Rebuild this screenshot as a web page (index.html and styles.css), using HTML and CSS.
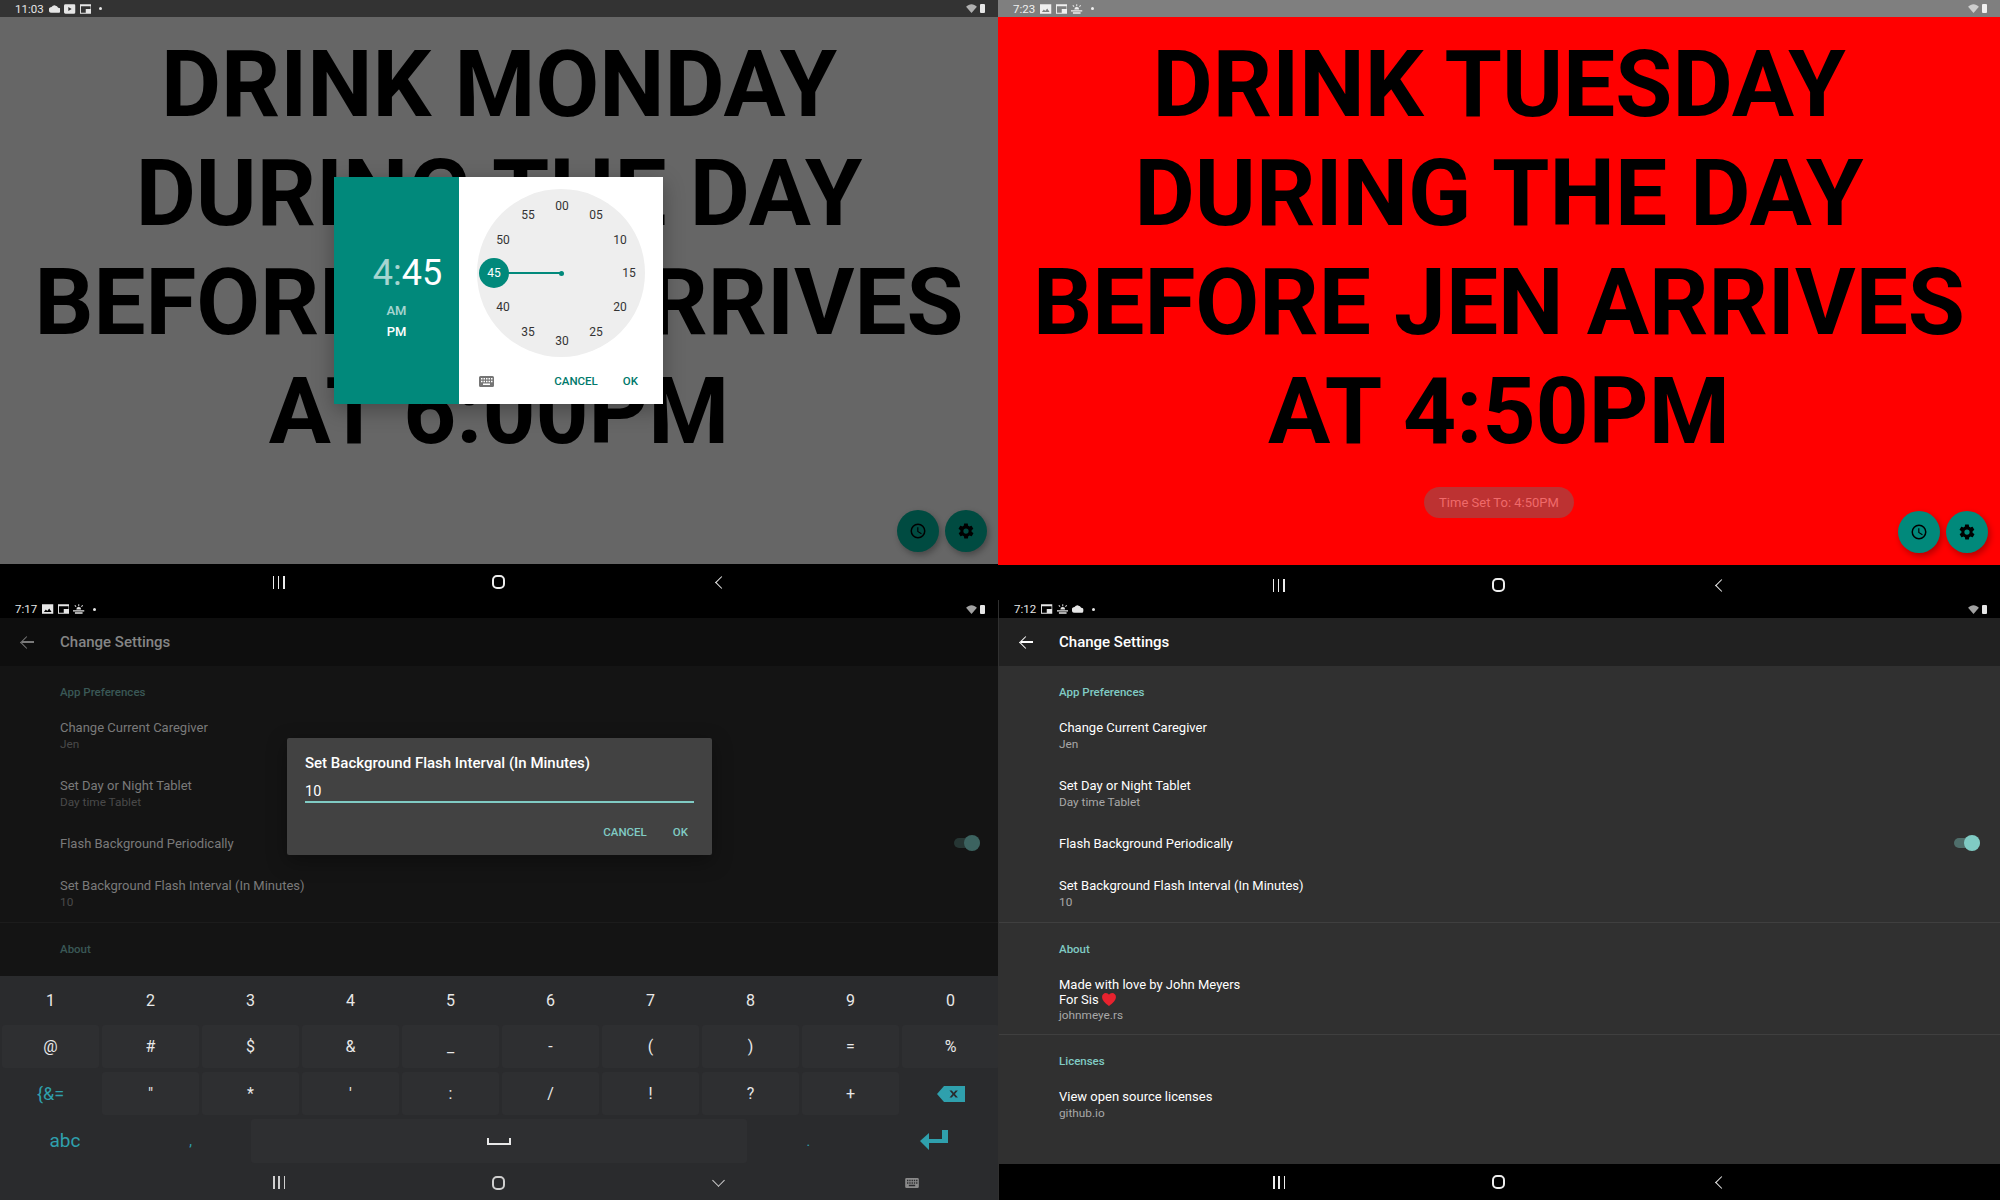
FILE: index.html
```html
<!DOCTYPE html>
<html lang="en">
<head>
    <meta charset="UTF-8" />
    <title>Drink Reminder Screens</title>
    <link rel="stylesheet" href="styles.css">
</head>
<body>
    <svg class="defs" width="0" height="0">
        <symbol id="i-cloud" viewBox="0 0 12 8"><path d="M3 8a3 3 0 0 1-.4-6A4 4 0 0 1 9.600 2.600 2.700 2.700 0 0 1 9.500 8z"/></symbol>
        <symbol id="i-play" viewBox="0 0 12 10"><path fill-rule="evenodd" d="M1.500 0h9A1.500 1.500 0 0 1 12 1.500v7a1.500 1.500 0 0 1-1.500 1.500h-9A1.500 1.500 0 0 1 0 8.500v-7A1.500 1.500 0 0 1 1.500 0zM4.500 2.800v4.400L8 5z"/></symbol>
        <symbol id="i-window" viewBox="0 0 12 10"><path fill-rule="evenodd" d="M0 0h12v10H0zM1 2v7h5V5h5V2z"/></symbol>
        <symbol id="i-photo" viewBox="0 0 12 10"><path fill-rule="evenodd" d="M0 0h12v10H0zM2 8h8L7.500 4.500 5.500 7 4 5.500z"/></symbol>
        <symbol id="i-sun" viewBox="0 0 12 10"><path d="M3.500 5.500a2.500 2.500 0 0 1 5 0zM5.500 0h1v2h-1zM1.500 1.500l.7-.7 1.400 1.400-.7.7zM10.500 1.500l-.7-.7-1.400 1.400.7.7zM0 6.300h12v1.200H0zM2 8.500h8V10H2z"/></symbol>
        <symbol id="i-wifi" viewBox="0 0 12 10"><path d="M6 10L0 3C3.500-.8 8.500-.8 12 3z"/></symbol>
        <symbol id="i-clock" viewBox="0 0 24 24"><path d="M12 2a10 10 0 1 0 0 20 10 10 0 0 0 0-20zm0 18a8 8 0 1 1 0-16 8 8 0 0 1 0 16zm.5-13H11v6l5.200 3.200.8-1.300-4.500-2.700z"/></symbol>
        <symbol id="i-gear" viewBox="0 0 24 24"><path d="M19.400 13c.1-.3.100-.7.100-1s0-.7-.1-1l2.100-1.600c.2-.2.200-.4.100-.6l-2-3.500c-.1-.2-.4-.3-.6-.2l-2.500 1c-.5-.4-1.100-.7-1.700-1l-.4-2.700c0-.2-.2-.4-.5-.4h-4c-.2 0-.4.200-.5.400l-.4 2.700c-.6.200-1.100.6-1.700 1l-2.500-1c-.2-.1-.5 0-.6.200l-2 3.500c-.1.200-.1.500.1.600L4.600 11c0 .3-.1.700-.1 1s0 .7.100 1l-2.100 1.600c-.2.200-.2.400-.1.600l2 3.500c.1.200.4.300.6.200l2.500-1c.5.400 1.100.7 1.700 1l.4 2.700c0 .2.200.4.500.4h4c.2 0 .4-.2.500-.4l.4-2.700c.6-.2 1.100-.6 1.700-1l2.500 1c.2.100.5 0 .6-.2l2-3.500c.1-.2.100-.5-.1-.6zM12 15.500a3.500 3.500 0 1 1 0-7 3.500 3.500 0 0 1 0 7z"/></symbol>
        <symbol id="i-keyboard" viewBox="0 0 15 11"><path fill-rule="evenodd" d="M1.500 0h12A1.500 1.500 0 0 1 15 1.500v8a1.500 1.500 0 0 1-1.500 1.500h-12A1.500 1.500 0 0 1 0 9.500v-8A1.500 1.500 0 0 1 1.500 0zM2 2v1.500h1.500V2zm2.500 0v1.500H6V2zM7 2v1.500h1.500V2zm2.500 0v1.500H11V2zM12 2v1.500h1.500V2zM2 4.700v1.500h1.500V4.700zm2.500 0v1.500H6V4.700zm2.500 0v1.500h1.500V4.700zm2.500 0v1.500H11V4.700zm2.500 0v1.500h1.500V4.700zM4 7.500V9h7V7.500z"/></symbol>
    </svg>

    <div class="screens">

        <!-- monday, time picker open -->
        <section class="screen screen-monday">
            <div class="status status-dim">
                <span class="clock-text">11:03</span>
                <svg class="si"><use href="#i-cloud"/></svg>
                <svg class="si"><use href="#i-play"/></svg>
                <svg class="si"><use href="#i-window"/></svg>
                <i class="status-dot"></i>
                <span class="spacer"></span>
                <svg class="si-wifi"><use href="#i-wifi"/></svg>
                <i class="battery"></i>
            </div>
            <div class="poster">
                <h1>DRINK MONDAY<br>DURING THE DAY<br>BEFORE JEN ARRIVES<br>AT 6:00PM</h1>
                <div class="fabs fabs-dim">
                    <span class="fab"><svg><use href="#i-clock"/></svg></span>
                    <span class="fab"><svg><use href="#i-gear"/></svg></span>
                </div>
            </div>
            <div class="nav">
                <span class="nav-recents"><i></i><i></i><i></i></span>
                <span class="nav-home"></span>
                <span class="nav-back"></span>
            </div>

            <div class="picker">
                <div class="picker-head">
                    <div class="picker-time"><span class="picker-hour">4</span><span class="picker-hour">:</span>45</div>
                    <div class="picker-ampm">
                        <span class="picker-am">AM</span>
                        <span>PM</span>
                    </div>
                </div>
                <div class="picker-body">
                    <div class="dial">
                        <span class="dial-hand"></span>
                        <span class="dial-dot"></span>
                        <span class="dial-sel">45</span>
                        <span class="dial-n" style="left:84px;top:17px">00</span>
                        <span class="dial-n" style="left:118px;top:26px">05</span>
                        <span class="dial-n" style="left:142px;top:51px">10</span>
                        <span class="dial-n" style="left:151px;top:84px">15</span>
                        <span class="dial-n" style="left:142px;top:118px">20</span>
                        <span class="dial-n" style="left:118px;top:143px">25</span>
                        <span class="dial-n" style="left:84px;top:152px">30</span>
                        <span class="dial-n" style="left:50px;top:143px">35</span>
                        <span class="dial-n" style="left:25px;top:118px">40</span>
                        <span class="dial-n" style="left:25px;top:51px">50</span>
                        <span class="dial-n" style="left:50px;top:26px">55</span>
                    </div>
                    <div class="picker-actions">
                        <svg class="picker-kb"><use href="#i-keyboard"/></svg>
                        <span class="spacer"></span>
                        <span class="btn-cancel">CANCEL</span>
                        <span class="btn-ok">OK</span>
                    </div>
                </div>
            </div>
        </section>

        <!-- tuesday -->
        <section class="screen screen-tuesday">
            <div class="status status-grey">
                <span class="clock-text">7:23</span>
                <svg class="si"><use href="#i-photo"/></svg>
                <svg class="si"><use href="#i-window"/></svg>
                <svg class="si"><use href="#i-sun"/></svg>
                <i class="status-dot"></i>
                <span class="spacer"></span>
                <svg class="si-wifi"><use href="#i-wifi"/></svg>
                <i class="battery"></i>
            </div>
            <div class="poster">
                <h1>DRINK TUESDAY<br>DURING THE DAY<br>BEFORE JEN ARRIVES<br>AT 4:50PM</h1>
                <div class="toast">Time Set To: 4:50PM</div>
                <div class="fabs">
                    <span class="fab"><svg><use href="#i-clock"/></svg></span>
                    <span class="fab"><svg><use href="#i-gear"/></svg></span>
                </div>
            </div>
            <div class="nav nav-short">
                <span class="nav-recents"><i></i><i></i><i></i></span>
                <span class="nav-home"></span>
                <span class="nav-back"></span>
            </div>
        </section>

        <!-- settings, interval dialog and keyboard -->
        <section class="screen settings settings-dim">
            <div class="status status-black">
                <span class="clock-text">7:17</span>
                <svg class="si"><use href="#i-photo"/></svg>
                <svg class="si"><use href="#i-window"/></svg>
                <svg class="si"><use href="#i-sun"/></svg>
                <i class="status-dot"></i>
                <span class="spacer"></span>
                <svg class="si-wifi"><use href="#i-wifi"/></svg>
                <i class="battery"></i>
            </div>
            <div class="appbar">
                <span class="arrow-back"></span>
                <span class="appbar-title">Change Settings</span>
            </div>
            <div class="list">
                <div class="group">
                    <div class="group-label">App Preferences</div>
                    <div class="row"><div class="row-title">Change Current Caregiver</div><div class="row-sub">Jen</div></div>
                    <div class="row"><div class="row-title">Set Day or Night Tablet</div><div class="row-sub">Day time Tablet</div></div>
                    <div class="row row-switch"><div class="row-title">Flash Background Periodically</div><span class="switch"></span></div>
                    <div class="row row-last"><div class="row-title">Set Background Flash Interval (In Minutes)</div><div class="row-sub">10</div></div>
                </div>
                <div class="group">
                    <div class="group-label">About</div>
                </div>
            </div>

            <div class="keyboard">
                <div class="kb-row kb-numbers">
                    <span class="key">1</span><span class="key">2</span><span class="key">3</span><span class="key">4</span><span class="key">5</span>
                    <span class="key">6</span><span class="key">7</span><span class="key">8</span><span class="key">9</span><span class="key">0</span>
                </div>
                <div class="kb-row kb-tall">
                    <span class="key key-bg">@</span><span class="key key-bg">#</span><span class="key key-bg">$</span><span class="key key-bg">&amp;</span><span class="key key-bg">_</span>
                    <span class="key key-bg">-</span><span class="key key-bg">(</span><span class="key key-bg">)</span><span class="key key-bg">=</span><span class="key key-bg">%</span>
                </div>
                <div class="kb-row kb-tall">
                    <span class="key key-teal key-sym">{&amp;=</span><span class="key key-bg">"</span><span class="key key-bg">*</span><span class="key key-bg">'</span><span class="key key-bg">:</span>
                    <span class="key key-bg">/</span><span class="key key-bg">!</span><span class="key key-bg">?</span><span class="key key-bg">+</span>
                    <span class="key">
                        <svg class="kb-del" viewBox="0 0 28 16"><path fill-rule="evenodd" d="M7 0h21v16H7L0 8zM12.500 4.500l3 3.500-3 3.500h2.300l1.900-2.300 1.900 2.300h2.300l-3-3.500 3-3.500h-2.300l-1.900 2.300-1.900-2.300z"/></svg>
                    </span>
                </div>
                <div class="kb-row kb-bottom">
                    <span class="key key-teal key-abc">abc</span>
                    <span class="key key-teal key-comma">,</span>
                    <span class="key key-bg key-space"><i class="space-mark"></i></span>
                    <span class="key key-teal key-dot">.</span>
                    <span class="key key-enter">
                        <svg class="kb-enter" viewBox="0 0 28 20"><path d="M22 0h6v13H9v7L0 11l9-8v6h13z"/></svg>
                    </span>
                </div>
                <div class="nav nav-kb">
                    <span class="nav-recents"><i></i><i></i><i></i></span>
                    <span class="nav-home"></span>
                    <span class="nav-down"></span>
                    <svg class="nav-kb-icon"><use href="#i-keyboard"/></svg>
                </div>
            </div>

            <div class="interval">
                <div class="interval-title">Set Background Flash Interval (In Minutes)</div>
                <div class="interval-input">10</div>
                <div class="interval-actions">
                    <span>CANCEL</span>
                    <span>OK</span>
                </div>
            </div>
        </section>

        <!-- settings -->
        <section class="screen settings settings-full">
            <div class="status status-black">
                <span class="clock-text">7:12</span>
                <svg class="si"><use href="#i-window"/></svg>
                <svg class="si"><use href="#i-sun"/></svg>
                <svg class="si"><use href="#i-cloud"/></svg>
                <i class="status-dot"></i>
                <span class="spacer"></span>
                <svg class="si-wifi"><use href="#i-wifi"/></svg>
                <i class="battery"></i>
            </div>
            <div class="appbar">
                <span class="arrow-back"></span>
                <span class="appbar-title">Change Settings</span>
            </div>
            <div class="list">
                <div class="group">
                    <div class="group-label">App Preferences</div>
                    <div class="row"><div class="row-title">Change Current Caregiver</div><div class="row-sub">Jen</div></div>
                    <div class="row"><div class="row-title">Set Day or Night Tablet</div><div class="row-sub">Day time Tablet</div></div>
                    <div class="row row-switch"><div class="row-title">Flash Background Periodically</div><span class="switch"></span></div>
                    <div class="row row-last"><div class="row-title">Set Background Flash Interval (In Minutes)</div><div class="row-sub">10</div></div>
                </div>
                <div class="group">
                    <div class="group-label">About</div>
                    <div class="row row-about">
                        <div class="row-title">Made with love by John Meyers<br>For Sis <svg class="heart" viewBox="0 0 16 15"><path d="M8 15C3 11 0 8 0 4.500 0 2 2 0 4.300 0 5.800 0 7.200.8 8 2.100 8.800.8 10.200 0 11.700 0 14 0 16 2 16 4.500 16 8 13 11 8 15z"/></svg></div>
                        <div class="row-sub">johnmeye.rs</div>
                    </div>
                </div>
                <div class="group">
                    <div class="group-label">Licenses</div>
                    <div class="row"><div class="row-title">View open source licenses</div><div class="row-sub">github.io</div></div>
                </div>
            </div>
            <div class="nav">
                <span class="nav-recents"><i></i><i></i><i></i></span>
                <span class="nav-home"></span>
                <span class="nav-back"></span>
            </div>
        </section>

    </div>
</body>
</html>
```

FILE: styles.css
```css
* {
    box-sizing: border-box;
}

html, body {
    margin: 0;
    height: 100%;
}

body {
    font-family: Roboto, "Noto Sans", sans-serif;
    background: #000;
    overflow: hidden;
}

.defs {
    position: absolute;
}

.screens {
    display: grid;
    grid-template-columns: 998px 1002px;
    grid-template-rows: 600px 600px;
    width: 2000px;
    height: 1200px;
}

.screen {
    position: relative;
    display: flex;
    flex-direction: column;
    overflow: hidden;
}

.spacer {
    flex: 1;
}

/* status bars */
.status {
    display: flex;
    align-items: center;
    flex: none;
    height: 18px;
    padding: 0 13px 0 15px;
    gap: 4px;
    color: #e6e6e6;
    font-size: 11.5px;
}

.status svg {
    fill: currentColor;
}

.status-dim {
    height: 17px;
    background: #333;
}

.status-grey {
    height: 17px;
    background: #7f7f7f;
    color: #f0f0f0;
}

.status-black {
    background: #000;
}

.clock-text {
    margin-right: 1px;
}

.si {
    width: 11.5px;
    height: 10px;
}

.si-wifi {
    width: 11px;
    height: 9px;
    opacity: 0.7;
}

.battery {
    width: 5px;
    height: 9px;
    margin-left: -1px;
    border-radius: 1px;
    background: currentColor;
}

.status-dot {
    width: 3px;
    height: 3px;
    margin-left: 4px;
    border-radius: 50%;
    background: currentColor;
}

/* nav bar */
.nav {
    position: relative;
    display: flex;
    align-items: center;
    justify-content: center;
    flex: none;
    height: 36px;
    gap: 207px;
    background: #000;
    color: #ededed;
}

.nav-short {
    height: 35px;
    padding-top: 5px;
}

.nav-recents {
    display: flex;
    justify-content: space-between;
    width: 12px;
    height: 13px;
}

.nav-recents i {
    width: 1.5px;
    background: currentColor;
}

.nav-home {
    width: 13px;
    height: 14px;
    border: 2px solid currentColor;
    border-radius: 5px;
}

.nav-back {
    width: 9px;
    height: 9px;
    margin-left: 5px;
    border-left: 1.5px solid currentColor;
    border-bottom: 1.5px solid currentColor;
    transform: rotate(45deg);
}

.nav-down {
    width: 9px;
    height: 9px;
    margin: 0 2px 4px;
    border-right: 1.5px solid currentColor;
    border-bottom: 1.5px solid currentColor;
    transform: rotate(45deg);
}

/* the two big reminder screens */
.poster {
    position: relative;
    flex: 1;
    padding-top: 13px;
    text-align: center;
}

.poster h1 {
    margin: 0;
    font-size: 92.5px;
    font-weight: 700;
    line-height: 109px;
    color: #000;
    white-space: nowrap;
}

.screen-monday .poster {
    background: #666;
}

.screen-tuesday .poster {
    background: #f00;
}

.screen-tuesday .poster h1 {
    font-size: 92.8px;
}

.toast {
    width: 150px;
    height: 31px;
    margin: 21px auto 0;
    border-radius: 16px;
    background: #bd3232;
    color: #f06a6a;
    font-size: 13px;
    line-height: 31px;
}

.fabs {
    position: absolute;
    right: 12px;
    bottom: 12px;
    display: flex;
    gap: 6px;
}

.fab {
    display: flex;
    align-items: center;
    justify-content: center;
    width: 42px;
    height: 42px;
    border-radius: 50%;
    background: #01897b;
    box-shadow: 2px 3px 6px rgba(0, 0, 0, 0.3);
}

.fab svg {
    width: 18px;
    height: 18px;
    fill: #000;
}

.fabs-dim {
    right: 11px;
}

.fabs-dim .fab {
    background: #004b41;
}

/* time picker */
.picker {
    position: absolute;
    left: 334px;
    top: 177px;
    display: flex;
    width: 329px;
    height: 227px;
    box-shadow: 0 6px 20px rgba(0, 0, 0, 0.3);
}

.picker-head {
    display: flex;
    flex-direction: column;
    align-items: center;
    width: 126px;
    padding-top: 76px;
    background: #01897b;
    color: #fff;
}

.picker-time {
    margin-left: 22px;
    font-size: 36px;
    line-height: 40px;
}

.picker-hour {
    opacity: 0.65;
}

.picker-ampm {
    display: flex;
    flex-direction: column;
    gap: 4px;
    margin-top: 9px;
    font-size: 13px;
    font-weight: 500;
    line-height: 17px;
    text-align: center;
}

.picker-am {
    opacity: 0.65;
}

.picker-body {
    display: flex;
    flex-direction: column;
    flex: 1;
    padding: 12px 18px 0 18px;
    background: #fff;
}

.dial {
    position: relative;
    width: 168px;
    height: 168px;
    flex: none;
    border-radius: 50%;
    background: #eee;
}

.dial-n {
    position: absolute;
    width: 0;
    height: 0;
    margin-left: 1px;
    display: flex;
    align-items: center;
    justify-content: center;
    font-size: 12px;
    color: #333;
}

.dial-sel {
    position: absolute;
    left: 2px;
    top: 69px;
    width: 30px;
    height: 30px;
    border-radius: 50%;
    background: #01897b;
    color: #fff;
    font-size: 12px;
    line-height: 30px;
    text-align: center;
}

.dial-hand {
    position: absolute;
    left: 17px;
    top: 83px;
    width: 67px;
    height: 2px;
    background: #01897b;
}

.dial-dot {
    position: absolute;
    left: 81.5px;
    top: 81.5px;
    width: 5px;
    height: 5px;
    border-radius: 50%;
    background: #01897b;
}

.picker-actions {
    display: flex;
    align-items: center;
    height: 24px;
    margin-top: 12px;
    margin-left: 2px;
    color: #00796b;
    font-size: 11.5px;
    font-weight: 500;
}

.picker-kb {
    width: 15px;
    height: 11px;
    fill: #757575;
}

.btn-ok {
    margin-left: 25px;
    margin-right: 7px;
}

/* settings */
.settings {
    background: #303030;
    color: #fff;
}

.settings-full {
    padding-left: 1px;
}

.appbar {
    display: flex;
    align-items: center;
    flex: none;
    height: 48px;
    padding-left: 22px;
    background: #212121;
}

.arrow-back {
    position: relative;
    width: 12px;
    height: 1.5px;
    margin-right: 26px;
    background: currentColor;
}

.arrow-back::before {
    content: "";
    position: absolute;
    left: 0;
    top: -3.5px;
    width: 8px;
    height: 8px;
    border-left: 1.5px solid currentColor;
    border-bottom: 1.5px solid currentColor;
    transform: rotate(45deg);
}

.appbar-title {
    font-size: 15px;
    font-weight: 500;
}

.list {
    flex: 1;
    overflow: hidden;
    padding-left: 60px;
}

.group {
    margin-left: -60px;
    padding-left: 60px;
    border-bottom: 1px solid #3f3f3f;
}

.group:last-child {
    border-bottom: 0;
}

.group-label {
    padding: 18px 0 7px;
    font-size: 11.5px;
    font-weight: 500;
    line-height: 16px;
    color: #80cbc4;
}

.row {
    height: 58px;
    padding-top: 13px;
    padding-right: 20px;
}

.row-title {
    font-size: 13px;
    line-height: 16px;
}

.row-sub {
    font-size: 11.8px;
    line-height: 17px;
    color: #a8a8a8;
}

.row-switch {
    display: flex;
    justify-content: space-between;
    height: 42px;
}

.row-last {
    height: 57px;
}

.row-about {
    height: 70px;
}

.row-about .row-title {
    line-height: 15px;
}

.heart {
    width: 14px;
    height: 13px;
    fill: #e8222e;
    vertical-align: -2px;
}

.switch {
    position: relative;
    width: 26px;
    height: 10px;
    margin-top: 2px;
    border-radius: 5px;
    background: #4f6e6b;
}

.switch::after {
    content: "";
    position: absolute;
    right: 0;
    top: -3px;
    width: 16px;
    height: 16px;
    border-radius: 50%;
    background: #80cbc4;
}

/* settings behind the dialog */
.settings-dim {
    background: #141414;
    color: #7a7a7a;
}

.settings-dim .appbar {
    background: #0e0e0e;
}

.settings-dim .appbar-title {
    color: #858585;
}

.settings-dim .group {
    border-color: #1c1c1c;
}

.settings-dim .group-label {
    color: #3a5856;
}

.settings-dim .row-sub {
    color: #4a4a4a;
}

.settings-dim .row-switch {
    padding-right: 18px;
}

.settings-dim .switch {
    background: #263634;
}

.settings-dim .switch::after {
    background: #3c6360;
}

.settings-dim .status {
    color: #e6e6e6;
}

/* interval dialog */
.interval {
    position: absolute;
    left: 287px;
    top: 138px;
    width: 425px;
    height: 117px;
    padding: 0 18px;
    border-radius: 2px;
    background: #424242;
    box-shadow: 0 6px 20px rgba(0, 0, 0, 0.35);
    color: #fff;
}

.interval-title {
    padding-top: 15px;
    font-size: 15px;
    font-weight: 500;
    line-height: 20px;
}

.interval-input {
    height: 30px;
    padding-top: 10px;
    border-bottom: 2px solid #80cbc4;
    font-size: 14.5px;
    line-height: 18px;
}

.interval-actions {
    display: flex;
    justify-content: flex-end;
    gap: 26px;
    margin-top: 22px;
    padding-right: 6px;
    color: #80cbc4;
    font-size: 11.5px;
    font-weight: 500;
    line-height: 14px;
}

/* keyboard */
.keyboard {
    flex: none;
    height: 224px;
    background: #2a2b2d;
    color: #e8e8e8;
}

.kb-row {
    display: grid;
    grid-template-columns: repeat(10, 97px);
    gap: 3px;
    padding-left: 2px;
}

.kb-numbers {
    height: 49px;
}

.kb-tall {
    height: 47px;
    padding-bottom: 4px;
}

.kb-bottom {
    display: flex;
    height: 44px;
    padding-left: 0;
    gap: 0;
}

.key {
    display: flex;
    align-items: center;
    justify-content: center;
    font-size: 16px;
    border-radius: 3px;
}

.key-bg {
    background: #2e2f31;
}

.key-teal {
    color: #2fa0ad;
}

.key-sym {
    font-size: 18px;
}

.key-abc {
    width: 130px;
    padding-bottom: 2px;
    font-size: 19px;
}

.key-comma {
    width: 122px;
    font-size: 14px;
}

.key-space {
    width: 496px;
}

.key-dot {
    width: 124px;
    font-size: 14px;
}

.key-enter {
    width: 128px;
    padding-bottom: 2px;
}

.space-mark {
    width: 24px;
    height: 7px;
    border: 2px solid #e8e8e8;
    border-top: 0;
}

.kb-del {
    width: 28px;
    height: 16px;
    fill: #2fa0ad;
}

.kb-enter {
    width: 28px;
    height: 20px;
    fill: #2fa0ad;
}

.nav-kb {
    height: 37px;
    padding-top: 2px;
    background: transparent;
    color: #cfcfcf;
}

.nav-kb-icon {
    position: absolute;
    left: 905px;
    top: 15px;
    width: 14px;
    height: 10px;
    fill: #8a8a8a;
}
```
